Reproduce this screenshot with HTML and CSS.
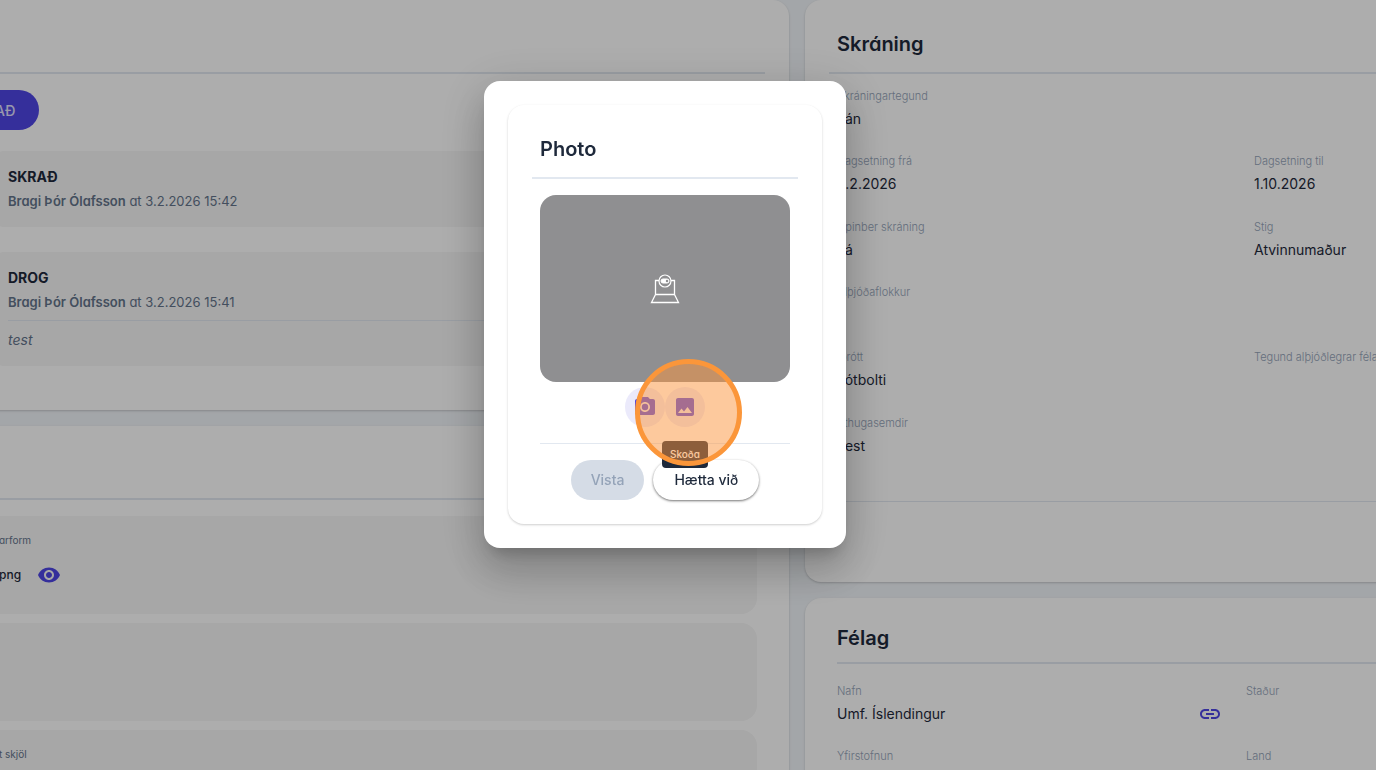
FILE: index.html
```html
<!DOCTYPE html>
<html lang="is">
<head>
<meta charset="UTF-8" />
<meta name="viewport" content="width=device-width, initial-scale=1" />
<title>Skráning</title>
<link rel="stylesheet" href="styles.css">
</head>
<body>

<main class="page">
  <div class="column">

    <!-- Status history -->
    <section class="card history">
      <div class="card-header"></div>
      <button type="button" class="btn-status">AÐ</button>
      <article class="entry">
        <h3>SKRAÐ</h3>
        <p><strong>Bragi Þór Ólafsson</strong> at 3.2.2026 15:42</p>
      </article>
      <article class="entry">
        <h3>DROG</h3>
        <p><strong>Bragi Þór Ólafsson</strong> at 3.2.2026 15:41</p>
        <p class="comment">test</p>
      </article>
    </section>

    <!-- Documents -->
    <section class="card documents">
      <div class="card-header"></div>
      <div class="doc">
        <span class="doc-label">arform</span>
        <div class="doc-file">
          <span>png</span>
          <a href="#" aria-label="Skoða">
            <svg class="icon" viewBox="0 0 24 24"><path d="M12 4.500C7 4.500 2.730 7.610 1 12c1.730 4.390 6 7.500 11 7.500s9.270-3.110 11-7.500c-1.730-4.390-6-7.500-11-7.500zM12 17c-2.760 0-5-2.240-5-5s2.240-5 5-5 5 2.240 5 5-2.240 5-5 5zm0-8c-1.660 0-3 1.340-3 3s1.340 3 3 3 3-1.340 3-3-1.340-3-3-3z"/></svg>
          </a>
        </div>
      </div>
      <div class="doc"></div>
      <div class="doc">
        <span class="doc-label">t skjöl</span>
      </div>
    </section>
  </div>

  <div class="column">
    <section class="card registration">
      <div class="card-header"><h2>Skráning</h2></div>
      <dl class="fields">
        <div class="field wide"><dt>Skráningartegund</dt><dd>Lán</dd></div>
        <div class="field"><dt>Dagsetning frá</dt><dd>3.2.2026</dd></div>
        <div class="field"><dt>Dagsetning til</dt><dd>1.10.2026</dd></div>
        <div class="field"><dt>Opinber skráning</dt><dd>Já</dd></div>
        <div class="field"><dt>Stig</dt><dd>Atvinnumaður</dd></div>
        <div class="field wide"><dt>Alþjóðaflokkur</dt><dd>–</dd></div>
        <div class="field"><dt>Íþrótt</dt><dd>Fótbolti</dd></div>
        <div class="field"><dt>Tegund alþjóðlegrar félagaskipta</dt><dd></dd></div>
        <div class="field wide"><dt>Athugasemdir</dt><dd>Test</dd></div>
      </dl>
      <div class="card-footer"></div>
    </section>

    <section class="card club">
      <div class="card-header"><h2>Félag</h2></div>
      <dl class="fields">
        <div class="field">
          <dt>Nafn</dt>
          <dd>Umf. Íslendingur
            <a href="#" aria-label="Opna félag">
              <svg class="icon" viewBox="0 0 24 24"><path d="M3.900 12c0-1.710 1.390-3.100 3.100-3.100h4V7H7c-2.760 0-5 2.240-5 5s2.240 5 5 5h4v-1.900H7c-1.710 0-3.100-1.390-3.100-3.100zM8 13h8v-2H8v2zm9-6h-4v1.900h4c1.710 0 3.100 1.390 3.100 3.100s-1.390 3.100-3.100 3.100h-4V17h4c2.760 0 5-2.240 5-5s-2.240-5-5-5z"/></svg>
            </a>
          </dd>
        </div>
        <div class="field"><dt>Staður</dt><dd></dd></div>
        <div class="field"><dt>Yfirstofnun</dt><dd></dd></div>
        <div class="field"><dt>Land</dt><dd></dd></div>
      </dl>
    </section>
  </div>
</main>

<!-- Photo dialog -->
<div class="backdrop">
  <div class="modal" role="dialog" aria-labelledby="photoTitle">
    <div class="card photo-card">
      <div class="card-header"><h2 id="photoTitle">Photo</h2></div>
      <div class="photo-body">
        <div class="preview">
          <svg viewBox="0 0 30 30" width="30" height="30" fill="none" stroke="#fff">
            <path d="M9 6.500H5.500V20.500H24.500V6.500H21M5.500 20.500L1.500 28.500H28.500L24.500 20.500" stroke-width="1.300"/>
            <circle cx="15" cy="7" r="6" stroke-width="1.200"/>
            <rect x="11" y="5" width="8" height="4" rx="2" fill="#fff"/>
            <circle cx="17" cy="7" r="1.200" fill="#8f8f91" stroke="none"/>
          </svg>
        </div>
        <div class="tools">
          <button type="button" class="btn-icon" aria-label="Myndavél">
            <svg class="icon" viewBox="0 0 24 24"><path d="M9 2L7.170 4H4c-1.100 0-2 .9-2 2v12c0 1.100.9 2 2 2h16c1.100 0 2-.9 2-2V6c0-1.100-.9-2-2-2h-3.170L15 2H9zm3 15c-2.760 0-5-2.240-5-5s2.240-5 5-5 5 2.240 5 5-2.240 5-5 5z"/><circle cx="12" cy="12" r="3.200"/></svg>
          </button>
          <div class="tool">
            <button type="button" class="btn-icon" aria-describedby="tip">
              <svg class="icon" viewBox="0 0 24 24"><path d="M21 19V5c0-1.100-.9-2-2-2H5c-1.100 0-2 .9-2 2v14c0 1.100.9 2 2 2h14c1.100 0 2-.9 2-2zM8.500 13.500l2.500 3.010L14.500 12l4.500 6H5l3.500-4.500z"/></svg>
            </button>
            <span class="tooltip" id="tip" role="tooltip">Skoða</span>
            <span class="click-marker"></span>
          </div>
        </div>
        <div class="actions">
          <button type="button" class="btn" disabled>Vista</button>
          <button type="button" class="btn btn-cancel">Hætta við</button>
        </div>
      </div>
    </div>
  </div>
</div>

</body>
</html>
```

FILE: styles.css
```css
* {
  box-sizing: border-box;
}
body {
  margin: 0;
  height: 100vh;
  overflow: hidden;
  font-family: Inter, "Liberation Sans", sans-serif;
  font-size: 14px;
  line-height: 24px;
  color: #1e293b;
  background: #f1f5f9;
}
h2, h3, p, dl, dd {
  margin: 0;
}
button {
  font-family: inherit;
  border: none;
  cursor: pointer;
}
a {
  display: flex;
  color: #4f46e5;
}
.icon {
  width: 24px;
  height: 24px;
  fill: currentColor;
}

/* the page is wider than the window and scrolled sideways */
.page {
  display: grid;
  grid-template-columns: 805fr 898fr;
  gap: 16px;
  margin: 0 -327px 0 -16px;
}
.column {
  display: flex;
  flex-direction: column;
  gap: 16px;
}
.card {
  background: #fff;
  border-radius: 16px;
  box-shadow: 0 1px 3px rgba(0, 0, 0, 0.1), 0 1px 2px rgba(0, 0, 0, 0.1);
}
.card-header {
  height: 74px;
  margin: 0 24px;
  padding: 32px 8px 0;
  border-bottom: 2px solid #e2e8f0;
}
.card-header h2 {
  font-size: 20px;
  font-weight: 600;
  line-height: 24px;
}

/* history */
.history {
  padding: 0 32px 44px 0;
  font-feature-settings: "cv11";
}
.history .card-header,
.documents .card-header {
  margin: 0 -8px 0 0;
}
.documents .card-header {
  margin-bottom: 16px;
}
.btn-status {
  display: block;
  height: 40px;
  margin: 16px 0 21px;
  padding: 0 24px 0 11px;
  border-radius: 0 20px 20px 0;
  background: #4f46e5;
  color: #e0e0ff;
  font-size: 14px;
  font-weight: 500;
  font-feature-settings: "cv11";
}
.entry {
  margin-left: 8px;
  padding: 14px 16px;
  border-radius: 12px;
  background: #f6f6f6;
  font-size: 13px;
  color: #64748b;
}
.entry + .entry {
  margin-top: 25px;
}
.entry h3 {
  font-size: 14px;
  font-weight: 700;
  color: #1e293b;
}
.entry strong {
  font-weight: 600;
}
.entry .comment {
  margin-top: 6px;
  padding-top: 7px;
  border-top: 1px solid #e2e8f0;
  font-size: 14px;
  font-style: italic;
}

/* documents */
.documents {
  display: flex;
  flex-direction: column;
  padding-right: 32px;
  font-feature-settings: "cv11";
}
.doc {
  height: 98px;
  margin-bottom: 9px;
  padding: 11px 15px;
  border-radius: 16px;
  background: #f6f6f6;
}
.doc-label {
  font-size: 10px;
  color: #64748b;
}
.doc-file {
  display: flex;
  align-items: center;
  gap: 16px;
  margin-top: 11px;
  font-size: 12px;
  font-weight: 500;
}

/* field lists */
.fields {
  display: grid;
  grid-template-columns: 1fr 1fr;
  padding: 10px 32px 0;
}
.registration h2 {
  font-feature-settings: "cv11";
}
.registration .fields {
  grid-template-rows: repeat(6, 1fr);
  height: 402px;
}
.wide {
  grid-column: span 2;
}
.field dt {
  font-size: 11px;
  font-weight: 300;
  color: #94a3b8;
  white-space: nowrap;
}
.field dd {
  display: flex;
  align-items: center;
  justify-content: space-between;
  height: 22px;
  padding-right: 24px;
}
.card-footer {
  height: 81px;
  margin: 25px 24px 0;
  border-top: 1px solid #e2e8f0;
}
.club .card-header {
  height: 66px;
  margin: 0 32px;
  padding: 28px 0 0;
}
.club .fields {
  grid-auto-rows: 65px;
  padding: 15px 48px 0 32px;
}

/* dialog */
.backdrop {
  position: fixed;
  inset: 0;
  display: flex;
  justify-content: center;
  align-items: flex-start;
  padding: 81px 46px 0 0;
  background: rgba(0, 0, 0, 0.32);
}
.modal {
  padding: 24px;
  border-radius: 16px;
  background: #fff;
  box-shadow: 0 11px 15px -7px rgba(0, 0, 0, 0.2),
    0 24px 38px 3px rgba(0, 0, 0, 0.14),
    0 9px 46px 8px rgba(0, 0, 0, 0.12);
}
.photo-body {
  padding: 16px 32px 24px;
}
.preview {
  display: flex;
  align-items: center;
  justify-content: center;
  width: 250px;
  height: 187px;
  border-radius: 16px;
  background: #8f8f91;
}
.tools {
  display: flex;
  justify-content: center;
  padding: 5px 0 16px;
}
.tool {
  position: relative;
}
.btn-icon {
  display: flex;
  align-items: center;
  justify-content: center;
  width: 40px;
  height: 40px;
  padding: 0;
  border-radius: 50%;
  background: #ebeafb;
  color: #4f46e5;
}
.tooltip {
  position: absolute;
  z-index: 1;
  top: 54px;
  left: -3px;
  padding: 1px 8px 2px;
  border-radius: 4px;
  background: #1e293b;
  color: #fff;
  font-size: 10px;
  font-weight: 500;
  font-feature-settings: "cv11";
}
.click-marker {
  position: absolute;
  z-index: 2;
  top: -28px;
  left: -30px;
  width: 107px;
  height: 107px;
  border: 5px solid #fb963a;
  border-radius: 50%;
  background: rgba(251, 148, 60, 0.5);
}
.actions {
  display: flex;
  justify-content: center;
  gap: 9px;
  padding-top: 16px;
  border-top: 1px solid #e2e8f0;
}
.btn {
  height: 40px;
  padding: 0 20px 2px;
  border-radius: 20px;
  font-size: 14px;
  font-weight: 500;
  color: #1e293b;
}
.btn:disabled {
  background: #d5dce6;
  color: #94a3b8;
}
.btn-cancel {
  padding: 0 21px 2px;
  background: #fff;
  box-shadow: 0 1px 3px rgba(0, 0, 0, 0.3), 0 1px 2px rgba(0, 0, 0, 0.3);
}
```
